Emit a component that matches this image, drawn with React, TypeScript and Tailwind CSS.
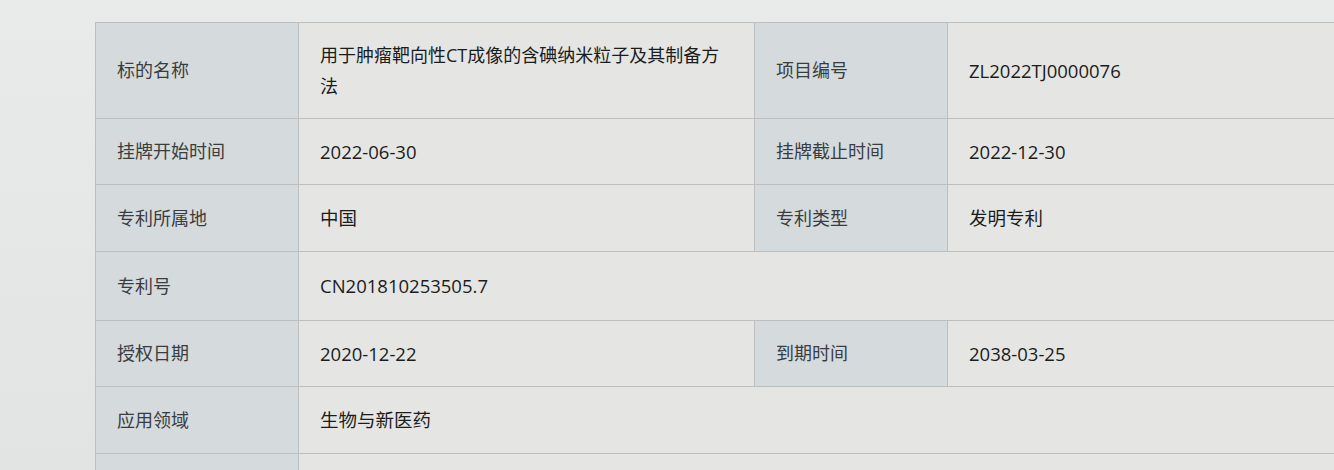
import React from "react";

const font = { fontFamily: '"Open Sans", "Noto Sans CJK SC", sans-serif' };

function Label({ children, w }: { children: React.ReactNode; w: string }) {
  return (
    <div className={`${w} shrink-0 flex items-center pl-[21px] bg-[#d5dadc] text-[#3a3d3f] text-[18px] border-r border-[#bbbfc0]`}>
      {children}
    </div>
  );
}

function Value({ children, w }: { children: React.ReactNode; w: string }) {
  return (
    <div className={`${w} flex items-center pl-[21px] bg-[#e5e6e4] text-[#1b1c1c] text-[18.5px] border-r border-[#bbbfc0]`}>
      {children}
    </div>
  );
}

export default function App() {
  return (
    <div
      className="w-[1334px] h-[470px] overflow-hidden bg-gradient-to-b from-[#e9eaea] to-[#e2e4e4] pt-[22px] pl-[95px]"
      style={font}
    >
      <div className="w-[1260px] border-t border-l border-[#bbbfc0] flex flex-col">
        <div className="flex h-[96px] border-b border-[#bbbfc0]">
          <Label w="w-[203px]">标的名称</Label>
          <Value w="w-[456px] shrink-0">
            <span className="whitespace-nowrap leading-[31px] text-[18px]">用于肿瘤靶向性CT成像的含碘纳米粒子及其制备方<br />法</span>
          </Value>
          <Label w="w-[193px]">项目编号</Label>
          <Value w="flex-1">ZL2022TJ0000076</Value>
        </div>
        <div className="flex h-[66px] border-b border-[#bbbfc0]">
          <Label w="w-[203px]">挂牌开始时间</Label>
          <Value w="w-[456px] shrink-0">2022-06-30</Value>
          <Label w="w-[193px]">挂牌截止时间</Label>
          <Value w="flex-1">2022-12-30</Value>
        </div>
        <div className="flex h-[67px] border-b border-[#bbbfc0]">
          <Label w="w-[203px]">专利所属地</Label>
          <Value w="w-[456px] shrink-0">中国</Value>
          <Label w="w-[193px]">专利类型</Label>
          <Value w="flex-1">发明专利</Value>
        </div>
        <div className="flex h-[69px] border-b border-[#bbbfc0]">
          <Label w="w-[203px]">专利号</Label>
          <Value w="flex-1">CN201810253505.7</Value>
        </div>
        <div className="flex h-[66px] border-b border-[#bbbfc0]">
          <Label w="w-[203px]">授权日期</Label>
          <Value w="w-[456px] shrink-0">2020-12-22</Value>
          <Label w="w-[193px]">到期时间</Label>
          <Value w="flex-1">2038-03-25</Value>
        </div>
        <div className="flex h-[67px] border-b border-[#bbbfc0]">
          <Label w="w-[203px]">应用领域</Label>
          <Value w="flex-1">生物与新医药</Value>
        </div>
        <div className="flex h-[40px]">
          <Label w="w-[203px]">{""}</Label>
          <Value w="flex-1">{""}</Value>
        </div>
      </div>
    </div>
  );
}
